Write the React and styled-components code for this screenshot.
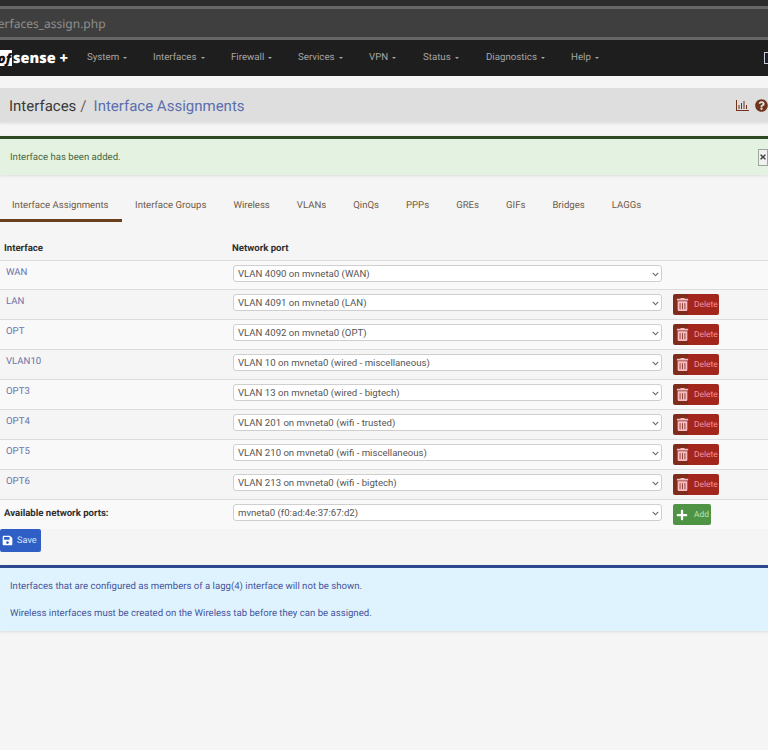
import React from 'react'
import styled, { createGlobalStyle } from 'styled-components'
import { FaTrashAlt, FaPlus, FaSave, FaQuestionCircle, FaChevronDown, FaTimes } from 'react-icons/fa'

const GlobalStyle = createGlobalStyle`
  html, body {
    margin: 0;
    padding: 0;
    background: #f5f5f5;
  }
  body {
    font-family: Roboto, "Liberation Sans", sans-serif;
    text-rendering: geometricPrecision;
    overflow: hidden;
  }
`

const Page = styled.div`
  width: 768px;
  height: 750px;
  overflow: hidden;
  background: #f5f5f5;
`

const BrowserBar = styled.div`
  height: 40px;
  box-sizing: border-box;
  padding-top: 6px;
  background: #2b2b2b;
`

const UrlField = styled.div`
  height: 34px;
  box-sizing: border-box;
  border-top: 3px solid #666;
  border-bottom: 3px solid #666;
  background: #3f3f3f;
  color: #8f8f8f;
  font-family: "Noto Sans", sans-serif;
  font-size: 12px;
  line-height: 29px;
  text-indent: -17px;
  white-space: nowrap;
  overflow: hidden;
`

const Nav = styled.nav`
  height: 36px;
  background: #1e1e1e;
  display: flex;
  align-items: center;
  position: relative;
`

const Logo = styled.div`
  width: 87px;
  flex: none;
  display: flex;
  align-items: center;
  color: #fff;
  font-family: "Open Sans", sans-serif;
  font-weight: 800;
  font-size: 14.5px;
`

const LogoBox = styled.span`
  background: #fff;
  color: #111;
  width: 11px;
  height: 16px;
  display: flex;
  align-items: center;
  justify-content: flex-end;
  overflow: hidden;
  font-style: italic;
  font-size: 13px;
  padding-right: 1px;
  margin-right: 1px;
`

const NavItem = styled.div`
  width: ${props => props.$w}px;
  flex: none;
  display: flex;
  align-items: center;
  gap: 4px;
  padding-bottom: 2px;
  color: #a6a6a6;
  font-size: 9.7px;
  &::after {
    content: '';
    margin-top: 2px;
    border-top: 2.5px solid #a6a6a6;
    border-left: 2.5px solid transparent;
    border-right: 2.5px solid transparent;
  }
`

const NavEdge = styled.span`
  position: absolute;
  right: 0;
  top: 12px;
  width: 3px;
  height: 10px;
  border: 1px solid #c8d0e0;
  border-right: none;
`

const Crumbs = styled.div`
  margin-top: 12px;
  height: 34px;
  box-sizing: border-box;
  padding: 1px 0 0 9px;
  background: #dedede;
  box-shadow: 0 2px 2px rgba(0, 0, 0, 0.08);
  display: flex;
  align-items: center;
  font-size: 15px;
  color: #3a3a3a;
`

const CrumbSep = styled.span`
  margin: 0 7px 0 4px;
  color: #6a5a55;
`

const CrumbLink = styled.span`
  color: #5c6fae;
`

const CrumbIcons = styled.div`
  margin-left: auto;
  display: flex;
  align-items: center;
  gap: 6px;
  color: #70331c;
`

const Alert = styled.div`
  box-sizing: border-box;
  border-top: 3px solid ${props => props.$edge};
  background: ${props => props.$bg};
  color: ${props => props.$fg};
  box-shadow: 0 1px 3px rgba(0, 0, 0, 0.1);
  font-size: 9.6px;
  display: flex;
  flex-direction: column;
`

const SuccessAlert = styled(Alert)`
  margin-top: 14px;
  height: 39px;
  padding: 0 0 0 10px;
  flex-direction: row;
  align-items: center;
  justify-content: space-between;
`

const InfoAlert = styled(Alert)`
  margin-top: 13px;
  height: 66px;
  padding: 13px 10px 0;
  gap: 16px;
`

const CloseBox = styled.span`
  width: 8px;
  height: 15px;
  display: flex;
  align-items: center;
  justify-content: center;
  border: 1px solid #9aa89a;
  background: #f1f1f1;
  color: #444;
  font-size: 8px;
`

const Tabs = styled.div`
  margin-top: 15px;
  height: 32px;
  display: flex;
  font-size: 9.6px;
  color: #6e5a48;
`

const Tab = styled.div`
  box-sizing: border-box;
  padding: 10px 13.5px 0;
  height: 32px;
  white-space: nowrap;
  &:first-child {
    padding-left: 12px;
    padding-right: 13px;
  }
  border-bottom: 3px solid ${props => (props.$active ? '#6a3f1c' : 'transparent')};
`

const Row = styled.div`
  display: grid;
  grid-template-columns: 233px 429px 1fr;
  box-sizing: border-box;
  border-bottom: 1px solid #dcdcdc;
  background: ${props => (props.$alt ? '#f9f9f9' : '#f5f5f5')};
`

const HeadRow = styled(Row)`
  height: 39px;
  align-items: end;
  padding-bottom: 6px;
  font-size: 9.6px;
  font-weight: 700;
  color: #2f2f2f;
  background: #f5f5f5;
`

const HeadCell = styled.div`
  margin-left: ${props => props.$offset}px;
`

const BodyRow = styled(Row)`
  height: ${props => (props.$short ? 29 : 30)}px;
  padding-top: 4px;
`

const FootRow = styled(Row)`
  height: 29px;
  padding-top: 4px;
  border-bottom: none;
  background: #f9f9f9;
`

const IfaceLink = styled.div`
  font-size: 9.6px;
  padding: 2px 0 0 6px;
  color: #6a72ab;
`

const FootLabel = styled.div`
  padding: 4px 0 0 4px;
  font-size: 9.6px;
  font-weight: 700;
  color: #2f2f2f;
`

const SelectWrap = styled.div`
  position: relative;
  height: 17px;
  color: #666;
  svg {
    position: absolute;
    right: 3px;
    top: 6px;
    font-size: 7px;
    pointer-events: none;
  }
`

const Select = styled.select`
  appearance: none;
  display: block;
  width: 100%;
  height: 17px;
  box-sizing: border-box;
  margin: 0;
  padding: 0 0 0 4px;
  background: #fff;
  border: 1px solid #cfcfcf;
  border-radius: 3px;
  color: #555;
  font-family: Roboto, sans-serif;
  font-size: 9.6px;
`

const ActionCell = styled.div`
  padding-left: 11px;
`

const Button = styled.div`
  height: 21px;
  display: inline-flex;
  align-items: center;
  box-sizing: border-box;
  border-radius: 2px;
  background: ${props => props.$bg};
  color: ${props => props.$fg};
  font-size: 8.4px;
`

const DeleteButton = styled(Button)`
  width: 46px;
  padding-left: 3px;
  gap: 5px;
  svg {
    font-size: 13px;
    color: #f7bcc4;
  }
`

const AddButton = styled(Button)`
  width: 38px;
  padding-left: 3px;
  gap: 6px;
  svg {
    font-size: 12px;
    color: #fff;
  }
`

const SaveButton = styled(Button)`
  width: 41px;
  height: 23px;
  padding-left: 2px;
  gap: 4px;
  font-size: 9.2px;
  display: flex;
  svg {
    font-size: 11px;
    color: #fff;
  }
`

const rows = [
  ['WAN', 'VLAN 4090 on mvneta0 (WAN)'],
  ['LAN', 'VLAN 4091 on mvneta0 (LAN)'],
  ['OPT', 'VLAN 4092 on mvneta0 (OPT)'],
  ['VLAN10', 'VLAN 10 on mvneta0 (wired - miscellaneous)'],
  ['OPT3', 'VLAN 13 on mvneta0 (wired - bigtech)'],
  ['OPT4', 'VLAN 201 on mvneta0 (wifi - trusted)'],
  ['OPT5', 'VLAN 210 on mvneta0 (wifi - miscellaneous)'],
  ['OPT6', 'VLAN 213 on mvneta0 (wifi - bigtech)'],
]

const navItems = [
  ['System', 66],
  ['Interfaces', 78],
  ['Firewall', 67],
  ['Services', 71],
  ['VPN', 54],
  ['Status', 63],
  ['Diagnostics', 85],
  ['Help', 60],
]

const tabs = ['Interface Assignments', 'Interface Groups', 'Wireless', 'VLANs', 'QinQs', 'PPPs', 'GREs', 'GIFs', 'Bridges', 'LAGGs']

const ChartIcon = () => (
  <svg width="13" height="11" viewBox="0 0 13 11" fill="#70331c">
    <rect x="0" y="0" width="1" height="11" />
    <rect x="0" y="10" width="13" height="1" />
    <rect x="2.5" y="5" width="1" height="4" />
    <rect x="5" y="3" width="1" height="6" />
    <rect x="7.5" y="1" width="1" height="8" />
    <rect x="10" y="5" width="1" height="4" />
  </svg>
)

const PortSelect = ({ value }) => (
  <SelectWrap>
    <Select defaultValue={value}>
      <option>{value}</option>
    </Select>
    <FaChevronDown />
  </SelectWrap>
)

export default function App() {
  return (
    <Page>
      <GlobalStyle />
      <BrowserBar>
        <UrlField>interfaces_assign.php</UrlField>
      </BrowserBar>
      <Nav>
        <Logo>
          <LogoBox>of</LogoBox>sense +
        </Logo>
        {navItems.map(([label, w]) => (
          <NavItem key={label} $w={w}>{label}</NavItem>
        ))}
        <NavEdge />
      </Nav>
      <Crumbs>
        Interfaces
        <CrumbSep>/</CrumbSep>
        <CrumbLink>Interface Assignments</CrumbLink>
        <CrumbIcons>
          <ChartIcon />
          <FaQuestionCircle size={13} />
        </CrumbIcons>
      </Crumbs>
      <SuccessAlert $edge="#2f4a22" $bg="#e4f2e2" $fg="#47683f">
        Interface has been added.
        <CloseBox><FaTimes /></CloseBox>
      </SuccessAlert>
      <Tabs>
        {tabs.map((t, i) => (
          <Tab key={t} $active={i === 0}>{t}</Tab>
        ))}
      </Tabs>
      <HeadRow>
        <HeadCell $offset={4}>Interface</HeadCell>
        <HeadCell $offset={-1}>Network port</HeadCell>
      </HeadRow>
      {rows.map(([name, port], i) => (
        <BodyRow key={name} $alt={i % 2 === 0} $short={i === 0}>
          <IfaceLink>{name}</IfaceLink>
          <PortSelect value={port} />
          {i > 0 && (
            <ActionCell>
              <DeleteButton $bg="linear-gradient(90deg, #7f2c1b 0 15px, #a3261c 15px)" $fg="#f78f9c"><FaTrashAlt />Delete</DeleteButton>
            </ActionCell>
          )}
        </BodyRow>
      ))}
      <FootRow>
        <FootLabel>Available network ports:</FootLabel>
        <PortSelect value="mvneta0 (f0:ad:4e:37:67:d2)" />
        <ActionCell>
          <AddButton $bg="#4f9444" $fg="#b9e3b4"><FaPlus />Add</AddButton>
        </ActionCell>
      </FootRow>
      <SaveButton $bg="#2f5fc4" $fg="#d5e6ff"><FaSave />Save</SaveButton>
      <InfoAlert $edge="#2b478f" $bg="#dff3fe" $fg="#46549a">
        <span>Interfaces that are configured as members of a lagg(4) interface will not be shown.</span>
        <span>Wireless interfaces must be created on the Wireless tab before they can be assigned.</span>
      </InfoAlert>
    </Page>
  )
}
